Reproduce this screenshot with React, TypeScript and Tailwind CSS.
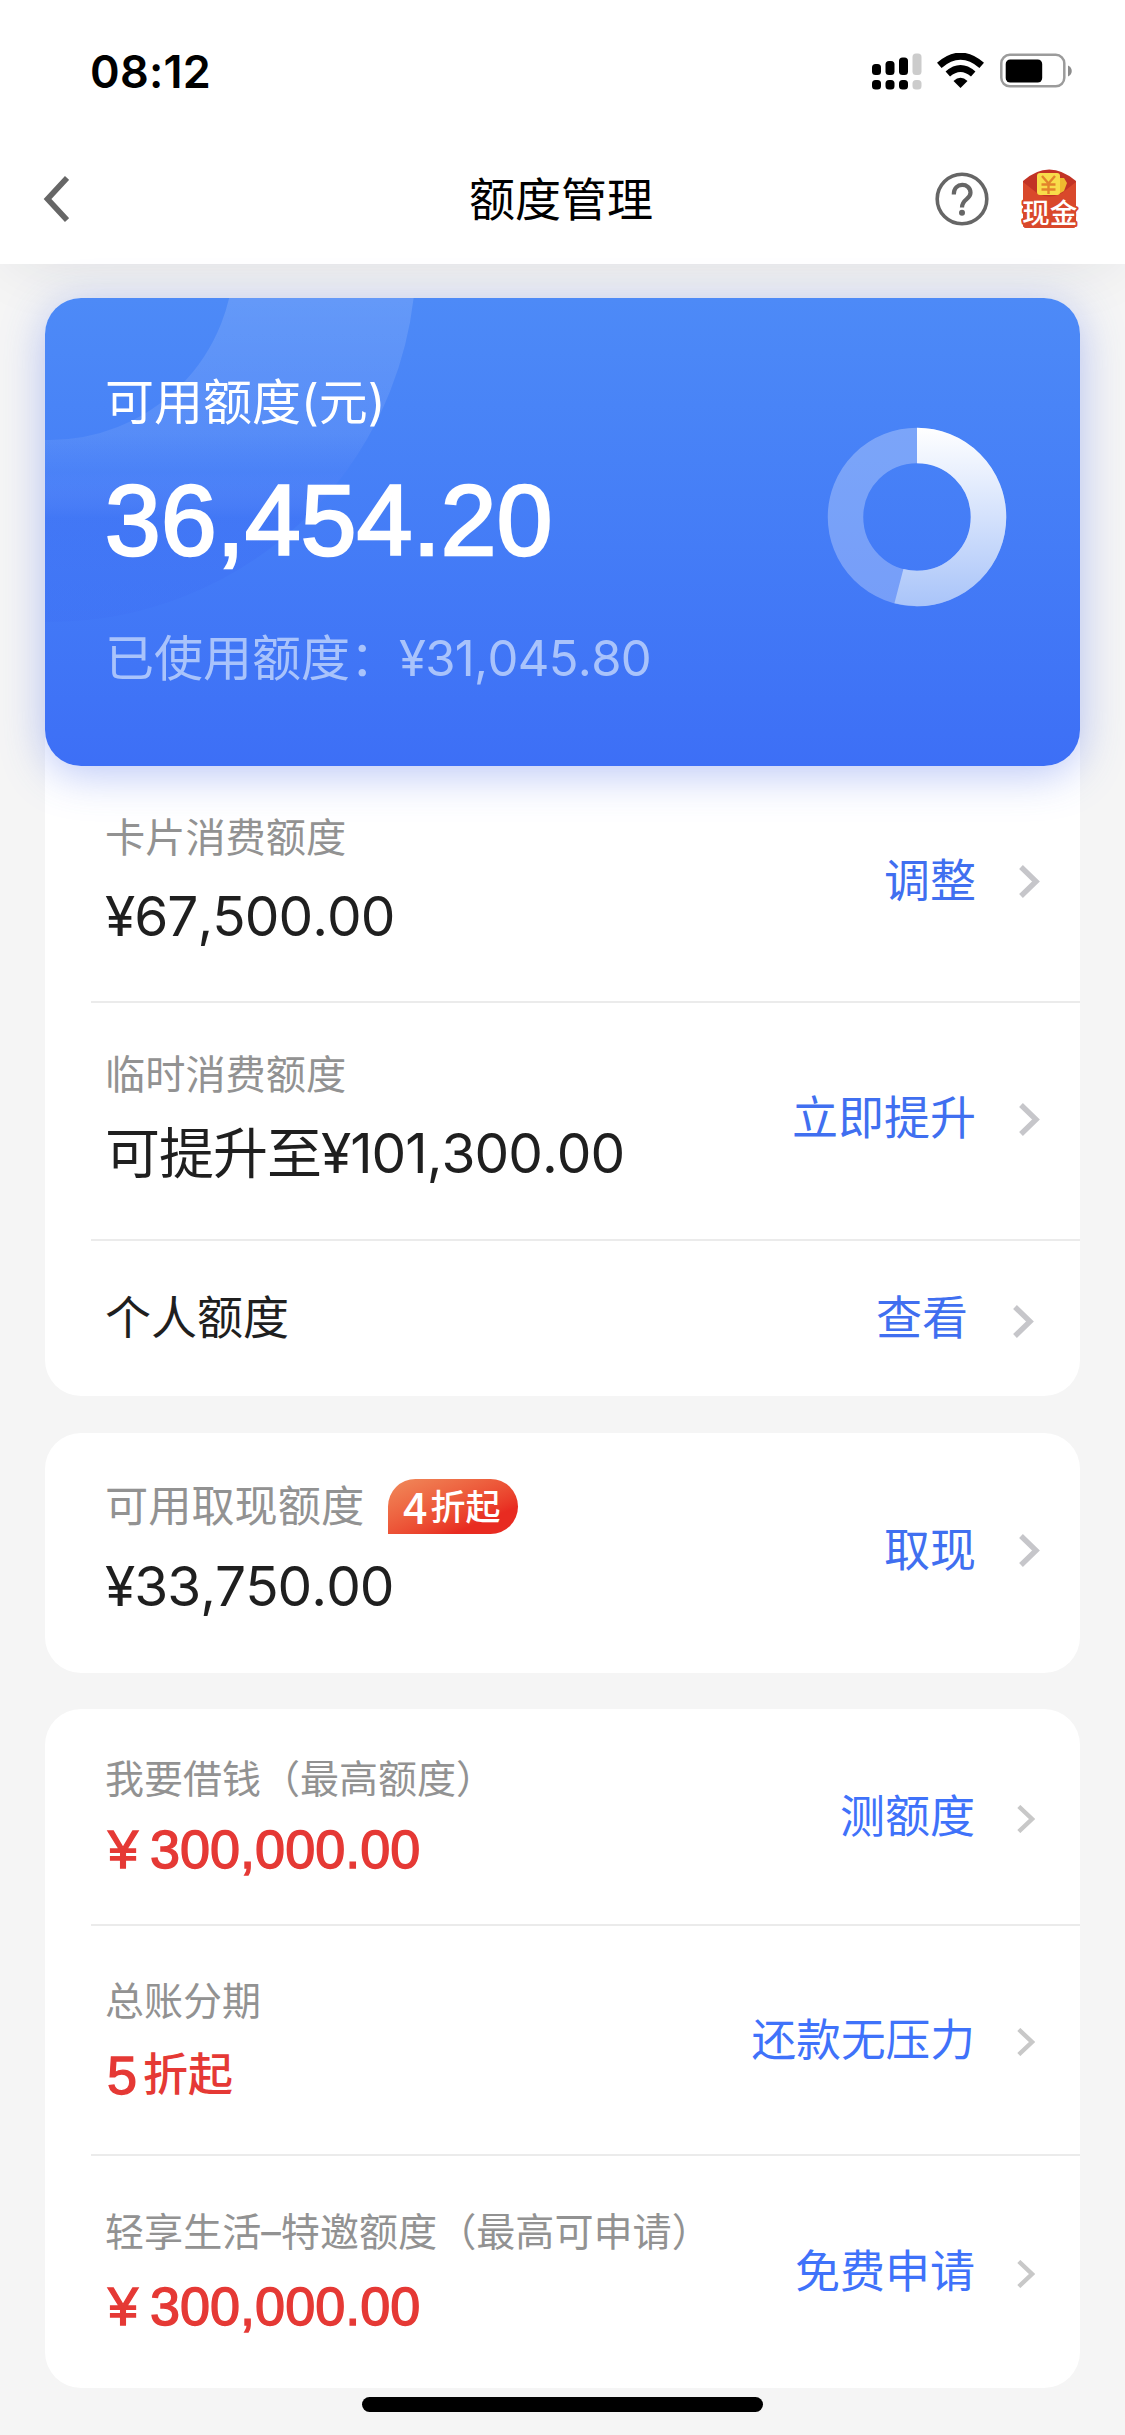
import React from 'react';
import clsx from 'clsx';

interface LimitRowProps {
  label?: React.ReactNode;
  value: React.ReactNode;
  action: string;
  className?: string;
  sideClassName?: string;
  arrow?: React.ReactNode;
}

const Arrow = ({ className = 'mt-1' }: { className?: string }) => (
  <svg className={clsx('h-[33px] w-[21px]', className)} viewBox="0 0 21 33" fill="none">
    <path d="M2 2L17 16.5L2 31" stroke="#c6c6ca" strokeWidth="5.4" />
  </svg>
);

const SmallArrow = () => (
  <svg className="mt-1 h-[28px] w-[18px]" viewBox="0 0 18 28" fill="none">
    <path d="M1.8 1.5L15 14L1.8 26.5" stroke="#c8c8c8" strokeWidth="4.4" />
  </svg>
);

const Divider = () => <div className="ml-[46px] h-[2px] bg-[#ebebeb]" />;

const LimitRow = ({
  label,
  value,
  action,
  className,
  sideClassName = 'text-[46px] text-[#406ff0]',
  arrow = <Arrow />,
}: LimitRowProps) => (
  <div className={clsx('flex justify-between pl-[60px]', className)}>
    <div className="flex flex-col">
      {label}
      {value}
    </div>
    <div className={clsx('flex items-center leading-[46px]', sideClassName)}>
      <span>{action}</span>
      {arrow}
    </div>
  </div>
);

const Label = ({ children, className = 'text-[40.2px]' }: { children: React.ReactNode; className?: string }) => (
  <div className={clsx('whitespace-nowrap leading-[40px] text-[#929292]', className)}>{children}</div>
);

const Amount = ({ children }: { children: React.ReactNode }) => (
  <div className="mt-[30px] whitespace-nowrap text-[55px] leading-[56px] tracking-[-1px] text-[#1f1f1f] [font-kerning:none]">
    {children}
  </div>
);

const RedAmount = () => (
  <div className="flex items-center font-[Liberation_Sans,sans-serif] text-[54px] leading-[56px] text-[#e53935] [-webkit-text-stroke:1.4px_#e53935]">
    <span className="ml-[3px] w-[42px]">¥</span>
    <span>300,000.00</span>
  </div>
);

const StatusBar = () => (
  <div className="flex h-[132px] items-start justify-between pl-[90px] pr-[53px] pt-[48px]">
    <span className="text-[45px] font-semibold leading-[48px] tracking-[0.2px] text-black">08:12</span>
    <div className="flex pt-[5px]">
      <svg className="h-[37px] w-[50px]" viewBox="0 0 50 37">
        <rect x="0" y="11" width="9" height="11" rx="3.5" />
        <rect x="13.5" y="8" width="9" height="14" rx="3.5" />
        <rect x="27" y="4.5" width="9" height="17.5" rx="3.5" />
        <rect x="40.5" y="0.5" width="9" height="21.5" rx="3.5" fill="#ccc" />
        <rect x="0" y="27" width="9" height="9.5" rx="3.5" />
        <rect x="13.5" y="27" width="9" height="9.5" rx="3.5" />
        <rect x="27" y="27" width="9" height="9.5" rx="3.5" />
        <rect x="40.5" y="27" width="9" height="9.5" rx="3.5" fill="#ccc" />
      </svg>
      <svg className="ml-[15px] h-[35px] w-[47px]" viewBox="0 0 47 35" fill="none">
        <path d="M2.3 12.4Q23.5 -6 44.7 12.4" stroke="#000" strokeWidth="7" />
        <path d="M10.8 21Q23.5 10 36.2 21" stroke="#000" strokeWidth="6.8" />
        <path d="M16.5 28Q23.5 21.5 30.5 28L23.5 35Z" fill="#000" />
      </svg>
      <svg className="ml-[16px] h-[36px] w-[72px]" viewBox="0 0 72 36">
        <rect x="1.3" y="1.8" width="63" height="31.5" rx="8.5" fill="none" stroke="#9b9b9b" strokeWidth="2.5" />
        <rect x="5.7" y="6.5" width="36.5" height="23" rx="4.5" />
        <path d="M68 12.5C73 14.5 73 21.5 68 23.5Z" fill="#8c8c8c" />
      </svg>
    </div>
  </div>
);

const CashIcon = () => (
  <svg className="ml-[32px] h-[60px] w-[58px]" viewBox="0 0 58 60">
    <path d="M2 12Q28 -11 55 12V56Q55 59 51 59H6Q2 59 2 56Z" fill="#c23325" />
    <path d="M2 13L16 24Q28 31 41 24L55 13V56Q55 59 51 59H6Q2 59 2 56Z" fill="#d9482b" />
    <path d="M36 9H43L46 14L43 22L36 26Z" fill="#efb92f" />
    <rect x="16" y="4" width="23" height="22" rx="3" fill="#f8dc4a" />
    <path d="M21 7L27.5 14.5L34 7M27.5 14V25M20.5 15.5H34.5M20.5 20.5H34.5" fill="none" stroke="#e2842b" strokeWidth="2.4" />
    <text
      x="28.8"
      y="53.5"
      textAnchor="middle"
      fontSize="27.5"
      fontWeight="500"
      fontFamily="Noto Sans CJK SC, sans-serif"
      fill="#fff"
      stroke="#d9482b"
      strokeWidth="4"
      strokeLinejoin="round"
      paintOrder="stroke"
    >
      现金
    </text>
  </svg>
);

const NavBar = () => (
  <div className="flex h-[132px] items-center justify-between pl-[43px] pr-[46px] pt-[2px]">
    <div className="flex w-[160px]">
      <svg className="h-[46px] w-[26px]" viewBox="0 0 26 46" fill="none">
        <path d="M24 2L4.5 23L24 44" stroke="#666" strokeWidth="5.6" />
      </svg>
    </div>
    <h1 className="text-[46px] leading-[46px] text-black">额度管理</h1>
    <div className="flex w-[160px] items-center justify-end">
      <svg className="h-[54px] w-[54px] shrink-0" viewBox="0 0 54 54" fill="none" stroke="#666">
        <circle cx="27" cy="27" r="24.8" strokeWidth="3.6" />
        <path d="M18.8 22.5C18.8 9.5 35.5 10.5 35.5 20.8C35.5 27.5 27 27 27 35.5" strokeWidth="4.2" />
        <circle cx="27" cy="40.8" r="3" fill="#666" stroke="none" />
      </svg>
      <CashIcon />
    </div>
  </div>
);

// Ring chart: the bright arc is the available share of the limit
const RingChart = () => {
  const length = 2 * Math.PI * 71.5;
  return (
    <svg className="h-[180px] w-[180px]" viewBox="0 0 180 180" fill="none">
      <defs>
        <linearGradient id="ring" gradientUnits="userSpaceOnUse" x1="0" y1="90" x2="180" y2="90">
          <stop offset="0" stopColor="#a9c4f9" />
          <stop offset="1" stopColor="#fff" />
        </linearGradient>
      </defs>
      <circle cx="90" cy="90" r="71.5" stroke="#fff" strokeOpacity="0.28" strokeWidth="35.5" />
      <circle
        cx="90"
        cy="90"
        r="71.5"
        stroke="url(#ring)"
        strokeWidth="35.5"
        strokeDasharray={`${length * 0.54} ${length}`}
        transform="rotate(-90 90 90)"
      />
    </svg>
  );
};

const BalanceCard = () => (
  <div className="relative flex h-[468px] justify-between overflow-hidden rounded-[36px] bg-gradient-to-b from-[#4d8af7] to-[#3d6ff6] pl-[60px] pr-[73px]">
    {/* Decorative ring in the corner */}
    <svg className="absolute left-0 top-0 h-[340px] w-[380px]" viewBox="0 0 380 340" fill="none">
      <defs>
        <linearGradient id="glow" gradientUnits="userSpaceOnUse" x1="0" y1="0" x2="0" y2="324">
          <stop offset="0" stopColor="#fff" stopOpacity="0.13" />
          <stop offset="0.42" stopColor="#fff" stopOpacity="0.08" />
          <stop offset="0.54" stopColor="#8a9cff" stopOpacity="0.06" />
          <stop offset="0.68" stopColor="#3a68f2" stopOpacity="0.3" />
          <stop offset="1" stopColor="#3a68f2" stopOpacity="0.15" />
        </linearGradient>
      </defs>
      <circle cx="5" cy="-42" r="275" stroke="url(#glow)" strokeWidth="182" />
    </svg>
    <div className="relative flex flex-col whitespace-nowrap text-white">
      <div className="mt-[81px] text-[49px] leading-[48px]">可用额度(元)</div>
      <div className="mt-[43px] font-[Liberation_Sans,sans-serif] text-[100px] leading-[100px] tracking-[0.3px] [-webkit-text-stroke:2.6px_white]">
        36,454.20
      </div>
      <div className="mt-[64px] text-[49px] leading-[50px] text-[#a9c3fb]">
        已使用额度：<span className="tracking-[-0.7px] [font-kerning:none]">¥31,045.80</span>
      </div>
    </div>
    <div className="relative mt-[129px]">
      <RingChart />
    </div>
  </div>
);

const App = () => {
  return (
    <div className="flex h-[2435px] w-[1125px] flex-col overflow-hidden bg-[#f5f5f5] font-[Inter,'Noto_Sans_CJK_SC',sans-serif]">
      <header className="relative h-[264px] bg-white shadow-[0_12px_60px_-14px_rgba(30,40,60,0.11)]">
        <StatusBar />
        <NavBar />
      </header>

      <main className="relative flex flex-col px-[45px] pt-[34px]">
        <section className="h-[1098px] rounded-[36px] bg-white">
          <div className="rounded-[36px] shadow-[0_8px_44px_rgba(70,105,235,0.38)]">
            <BalanceCard />
          </div>
          <LimitRow
            className="h-[235px] pt-[52px]"
            label={<Label>卡片消费额度</Label>}
            value={<Amount>¥67,500.00</Amount>}
            action="调整"
            sideClassName="-mt-[52px] gap-[43px] pb-2 pr-10 text-[46px] text-[#406ff0]"
          />
          <Divider />
          <LimitRow
            className="h-[236px] pt-[52px]"
            label={<Label>临时消费额度</Label>}
            value={<Amount>可提升至¥101,300.00</Amount>}
            action="立即提升"
            sideClassName="-mt-[52px] gap-[43px] pb-2 pr-10 text-[46px] text-[#406ff0]"
          />
          <Divider />
          <LimitRow
            className="h-[152px] items-center"
            value={<div className="text-[46px] leading-[46px] text-[#1f1f1f]">个人额度</div>}
            action="查看"
            sideClassName="gap-[45px] pr-[46px] text-[46px] text-[#406ff0]"
            arrow={<Arrow className="mt-2" />}
          />
        </section>

        <section className="mt-[37px] rounded-[36px] bg-white">
          <LimitRow
            className="h-[240px] pt-[46px]"
            label={
              <div className="flex items-center gap-[24px]">
                <Label className="-mt-[2px] text-[43.2px]">可用取现额度</Label>
                <span className="flex h-[55px] w-[130px] items-center justify-center gap-[3px] rounded-[28px] rounded-bl-none bg-gradient-to-br from-[#f08a5b] to-[#e82b21] to-75% pb-[3px] pr-[3px] font-['Noto_Sans_CJK_SC',sans-serif] text-[35px] font-medium leading-[52px] text-white">
                  <span className="text-[43px]">4</span>
                  <span>折起</span>
                </span>
              </div>
            }
            value={
              <div className="-mt-[6px]">
                <Amount>¥33,750.00</Amount>
              </div>
            }
            action="取现"
            sideClassName="-mt-[47px] gap-[43px] pb-2 pr-10 text-[46px] text-[#406ff0]"
          />
        </section>

        <section className="mt-[36px] rounded-[36px] bg-white">
          <LimitRow
            className="h-[215px] pt-[50px]"
            label={<Label className="text-[39px]">我要借钱（最高额度）</Label>}
            value={
              <div className="mt-[22px]">
                <RedAmount />
              </div>
            }
            action="测额度"
            sideClassName="-mt-[50px] gap-[42px] pr-[45px] text-[45px] text-[#3f72fa]"
            arrow={<SmallArrow />}
          />
          <Divider />
          <LimitRow
            className="h-[228px] pt-[55px]"
            label={<Label className="text-[39px]">总账分期</Label>}
            value={
              <div className="mt-[26px] flex items-center gap-[6px] text-[45px] font-medium leading-[56px] text-[#e53935]">
                <span className="ml-[2px] font-[Liberation_Sans,sans-serif] text-[54px] font-normal [-webkit-text-stroke:1.4px_#e53935]">
                  5
                </span>
                <span>折起</span>
              </div>
            }
            action="还款无压力"
            sideClassName="-mt-[55px] gap-[42px] pr-[45px] text-[44.7px] text-[#3f72fa]"
            arrow={<SmallArrow />}
          />
          <Divider />
          <LimitRow
            className="h-[232px] pt-[56px]"
            label={<Label className="text-[39.1px]">轻享生活–特邀额度（最高可申请）</Label>}
            value={
              <div className="mt-[26px]">
                <RedAmount />
              </div>
            }
            action="免费申请"
            sideClassName="-mt-[57px] gap-[42px] pr-[45px] text-[45px] text-[#3f72fa]"
            arrow={<SmallArrow />}
          />
        </section>
      </main>

      {/* Home indicator */}
      <div className="mx-auto mt-[9px] h-[15px] w-[401px] shrink-0 rounded-full bg-black" />
    </div>
  );
};

export default App;
